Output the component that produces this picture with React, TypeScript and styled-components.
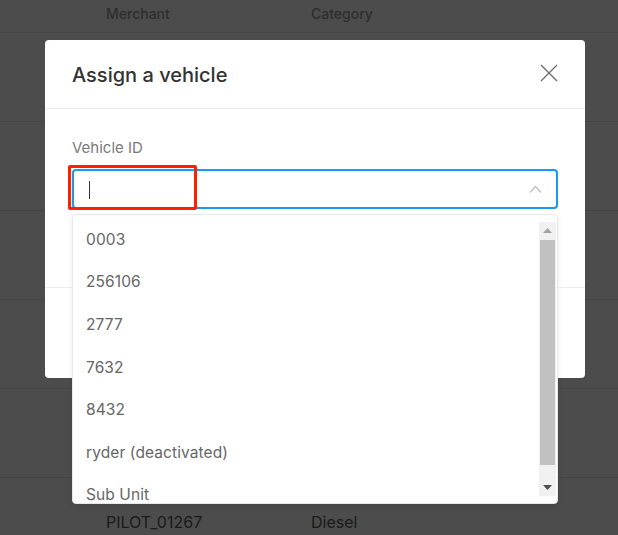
import React from 'react';
import styled, { createGlobalStyle } from 'styled-components';

const GlobalStyle = createGlobalStyle`
  html, body {
    margin: 0;
    padding: 0;
    background: #ffffff;
    font-family: Inter, "Noto Sans", sans-serif;
  }
`;

const rows = [
  { merchant: 'SHELL_00412', category: 'Diesel' },
  { merchant: 'LOVES_00881', category: 'Diesel' },
  { merchant: 'TA_00213', category: 'Diesel' },
  { merchant: 'FLYING_J_0077', category: 'Diesel' },
  { merchant: 'SPEEDWAY_118', category: 'Diesel' },
  { merchant: 'PILOT_01267', category: 'Diesel' },
];

const vehicles = ['0003', '256106', '2777', '7632', '8432', 'ryder (deactivated)', 'Sub Unit', 'Truck 12'];

const Page = styled.div`
  width: 618px;
  height: 535px;
  overflow: hidden;
  position: relative;
`;

const Table = styled.div`
  display: flex;
  flex-direction: column;
`;

const HeadRow = styled.div`
  display: grid;
  grid-template-columns: 106px 205px 1fr;
  height: 33px;
  box-sizing: border-box;
  padding-top: 5px;
  border-bottom: 1px solid #e6e6e6;
  font-size: 14px;
  line-height: 17px;
  font-weight: 500;
  color: #9a9a9a;
`;

const Row = styled.div`
  display: grid;
  grid-template-columns: 106px 205px 1fr;
  height: 89px;
  box-sizing: border-box;
  align-items: center;
  border-bottom: 1px solid #e6e6e6;
  font-size: 16px;
  color: #5a5a5a;
`;

const Cell = styled.div`
  grid-column: ${(p: { col: number }) => p.col};
`;

const Overlay = styled.div`
  position: absolute;
  inset: 0;
  background: rgba(0, 0, 0, 0.7);
`;

const Modal = styled.div`
  margin: 40px 0 0 45px;
  width: 540px;
  height: 338px;
  background: #fff;
  border-radius: 4px;
  display: flex;
  flex-direction: column;
`;

const ModalHeader = styled.div`
  height: 68px;
  padding: 0 27px;
  display: flex;
  align-items: center;
  justify-content: space-between;
  border-bottom: 1px solid #eeeeee;
`;

const Title = styled.h2`
  margin: 0;
  padding-top: 1px;
  font-size: 20px;
  font-weight: 500;
  color: #333333;
`;

const CloseButton = styled.button`
  border: 0;
  background: none;
  padding: 0;
  width: 20px;
  height: 20px;
  display: flex;
  align-items: center;
  justify-content: center;
  margin-right: -1px;
  margin-top: -3px;
  cursor: pointer;
`;

const ModalBody = styled.div`
  height: 179px;
  padding: 29px 27px 0;
  box-sizing: border-box;
  border-bottom: 1px solid #eeeeee;
`;

const Label = styled.div`
  font-size: 15px;
  color: #7a7a7a;
  line-height: 18px;
  margin-bottom: 12px;
  padding-top: 1px;
`;

const Field = styled.div`
  position: relative;
`;

const InputBox = styled.div`
  height: 40px;
  box-sizing: border-box;
  border: 2px solid #1b98f5;
  border-radius: 4px;
  display: flex;
  align-items: center;
  justify-content: space-between;
  padding: 0 14px 0 15px;
`;

const Caret = styled.span`
  width: 1px;
  height: 18px;
  margin-top: 1px;
  background: #333;
`;

const Highlight = styled.div`
  position: absolute;
  left: -4px;
  top: -4px;
  width: 129px;
  height: 45px;
  box-sizing: border-box;
  border: 3px solid #ff2000;
  border-radius: 2px;
`;

const Dropdown = styled.div`
  position: absolute;
  left: 0;
  top: 45px;
  width: 486px;
  height: 290px;
  box-sizing: border-box;
  background: #fff;
  border: 1px solid #e8e8e8;
  border-radius: 4px;
  box-shadow: 0 2px 6px rgba(0, 0, 0, 0.08);
  display: flex;
  overflow: hidden;
`;

const OptionList = styled.ul`
  flex: 1;
  list-style: none;
  margin: 0;
  padding: 3px 0 0;
  overflow: hidden;
`;

const Option = styled.li`
  height: 42.6px;
  display: flex;
  align-items: center;
  padding-left: 13px;
  font-size: 15.5px;
  color: #666666;
  letter-spacing: 0.1px;
`;

const Scrollbar = styled.div`
  width: 17px;
  margin: 7px 1px 7px 0;
  background: #f1f1f1;
  display: flex;
  flex-direction: column;
`;

const ScrollButton = styled.div`
  height: 17px;
  display: flex;
  align-items: center;
  justify-content: center;
`;

const Thumb = styled.div`
  height: 225px;
  margin: 1px 1px 0;
  background: #c1c1c1;
`;

const TrackSpace = styled.div`
  flex: 1;
`;

const Arrow = ({ up, color }: { up?: boolean; color: string }) => (
  <svg width="9" height="5" viewBox="0 0 9 5">
    <path d={up ? 'M0 5 L4.5 0 L9 5 Z' : 'M0 0 L4.5 5 L9 0 Z'} fill={color} />
  </svg>
);

export default function App() {
  return (
    <Page>
      <GlobalStyle />
      <Table>
        <HeadRow>
          <Cell col={2}>Merchant</Cell>
          <Cell col={3}>Category</Cell>
        </HeadRow>
        {rows.map((r) => (
          <Row key={r.merchant}>
            <Cell col={2}>{r.merchant}</Cell>
            <Cell col={3}>{r.category}</Cell>
          </Row>
        ))}
      </Table>
      <Overlay>
        <Modal>
          <ModalHeader>
            <Title>Assign a vehicle</Title>
            <CloseButton aria-label="Close">
              <svg width="18" height="18" viewBox="0 0 18 18">
                <path d="M1 1 L17 17 M17 1 L1 17" stroke="#6b6b6b" strokeWidth="1.3" fill="none" />
              </svg>
            </CloseButton>
          </ModalHeader>
          <ModalBody>
            <Label>Vehicle ID</Label>
            <Field>
              <InputBox>
                <Caret />
                <svg width="13" height="8" viewBox="0 0 13 8">
                  <path d="M1 7.5 L6.5 1.5 L12 7.5" stroke="#bdbdbd" strokeWidth="1.2" fill="none" />
                </svg>
              </InputBox>
              <Highlight />
              <Dropdown>
                <OptionList>
                  {vehicles.map((v) => (
                    <Option key={v}>{v}</Option>
                  ))}
                </OptionList>
                <Scrollbar>
                  <ScrollButton>
                    <Arrow up color="#a3a3a3" />
                  </ScrollButton>
                  <Thumb />
                  <TrackSpace />
                  <ScrollButton>
                    <Arrow color="#505050" />
                  </ScrollButton>
                </Scrollbar>
              </Dropdown>
            </Field>
          </ModalBody>
        </Modal>
      </Overlay>
    </Page>
  );
}
